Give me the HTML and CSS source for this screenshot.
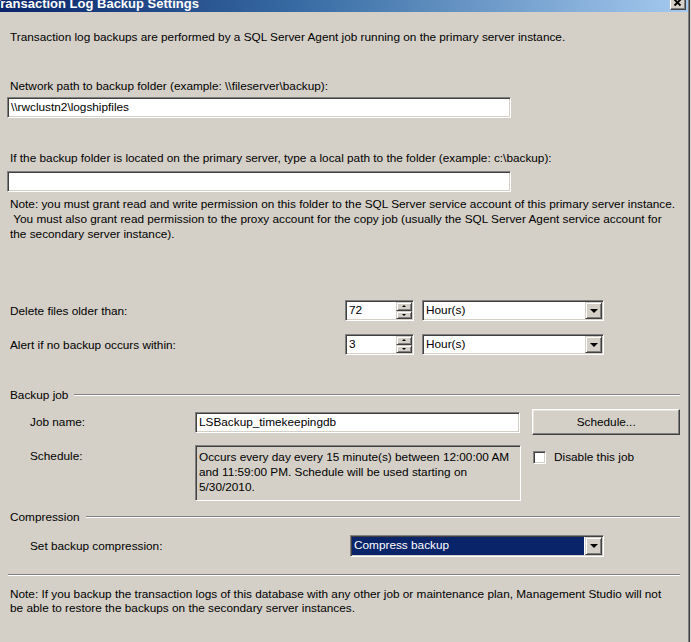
FILE: index.html
```html
<!doctype html>
<html lang="en">
  <head>
    <meta charset="UTF-8" />
    <title>Transaction Log Backup Settings</title>
    <link rel="stylesheet" href="styles.css">
  </head>
  <body>
    <div class="window">
      <div class="titlebar">
        <span class="title">Transaction Log Backup Settings</span>
        <span class="close-btn">
          <svg width="16" height="14" viewBox="0 0 16 14">
            <path d="M4.5 3.5 L10.5 9.5 M10.5 3.5 L4.5 9.5" stroke="#000" stroke-width="1.8" fill="none" />
          </svg>
        </span>
      </div>

      <div class="content">
        <p class="intro">Transaction log backups are performed by a SQL Server Agent job running on the primary server instance.</p>

        <div class="label net-label">Network path to backup folder (example: \\fileserver\backup):</div>
        <div class="textbox path-box">\\rwclustn2\logshipfiles</div>

        <div class="label local-label">If the backup folder is located on the primary server, type a local path to the folder (example: c:\backup):</div>
        <div class="textbox path-box local-box"></div>

        <p class="note perm-note">Note: you must grant read and write permission on this folder to the SQL Server service account of this primary server instance.<br>&nbsp;You must also grant read permission to the proxy account for the copy job (usually the SQL Server Agent service account for<br>the secondary server instance).</p>

        <!-- retention settings -->
        <div class="row delete-row">
          <span class="row-label">Delete files older than:</span>
          <div class="spinner">
            <span class="spin-value">72</span>
            <span class="spin-btns"><span class="spin-up"></span><span class="spin-down"></span></span>
          </div>
          <div class="combo unit-combo">
            <span class="combo-value">Hour(s)</span>
            <span class="combo-btn"></span>
          </div>
        </div>

        <div class="row alert-row">
          <span class="row-label">Alert if no backup occurs within:</span>
          <div class="spinner">
            <span class="spin-value">3</span>
            <span class="spin-btns"><span class="spin-up"></span><span class="spin-down"></span></span>
          </div>
          <div class="combo unit-combo">
            <span class="combo-value">Hour(s)</span>
            <span class="combo-btn"></span>
          </div>
        </div>

        <!-- backup job -->
        <div class="group-header job-header"><span>Backup job</span></div>

        <div class="row job-row">
          <span class="row-label sub-label">Job name:</span>
          <div class="textbox job-box">LSBackup_timekeepingdb</div>
          <span class="btn schedule-btn">Schedule...</span>
        </div>

        <div class="row schedule-row">
          <span class="row-label sub-label schedule-label">Schedule:</span>
          <div class="textbox readonly schedule-box">Occurs every day every 15 minute(s) between 12:00:00 AM<br>and 11:59:00 PM. Schedule will be used starting on<br>5/30/2010.</div>
          <label class="check">
            <span class="checkbox"></span>
            <span>Disable this job</span>
          </label>
        </div>

        <!-- compression -->
        <div class="group-header compression-header"><span>Compression</span></div>

        <div class="row compression-row">
          <span class="row-label sub-label compression-label">Set backup compression:</span>
          <div class="combo compression-combo">
            <span class="combo-value selected">Compress backup</span>
            <span class="combo-btn"></span>
          </div>
        </div>

        <div class="separator"></div>

        <p class="note bottom-note">Note: If you backup the transaction logs of this database with any other job or maintenance plan, Management Studio will not<br>be able to restore the backups on the secondary server instances.</p>
      </div>
    </div>
  </body>
</html>
```

FILE: styles.css
```css
body {
  margin: 0;
  background: #d4d0c8;
  font-family: "Liberation Sans", Arial, sans-serif;
  font-size: 11.8px;
  color: #000;
}
.window {
  width: 688px;
  min-height: 642px;
  border-right: 1px solid #808080;
  box-shadow: 1px 0 0 #404040;
}
.titlebar {
  height: 12px;
  overflow: hidden;
  display: flex;
  justify-content: space-between;
  background: linear-gradient(to right, #0a246a, #3a6ea5 45%, #a6caf0);
}
.title {
  color: #fff;
  font-weight: bold;
  font-size: 13px;
  line-height: 14px;
  margin-top: -3px;
  margin-left: -7px;
}
.close-btn {
  display: block;
  width: 16px;
  height: 14px;
  margin-top: -4px;
  margin-right: 2px;
  background: #d4d0c8;
  border: 1px solid;
  border-color: #fff #404040 #404040 #fff;
  box-shadow: inset -1px -1px 0 #808080;
  box-sizing: border-box;
}
.close-btn svg {
  display: block;
  margin: -1px 0 0 -1px;
}
.content {
  padding: 0 8px 0 7px;
}
.intro,
.note {
  margin: 0;
  padding-left: 3px;
}
.intro {
  margin-top: 18px;
  line-height: 14px;
}
.label {
  padding-left: 3px;
  line-height: 14px;
}
.net-label {
  margin-top: 35px;
}
.local-label {
  margin-top: 33px;
}
.textbox {
  background: #fff;
  border: 1px solid;
  border-color: #808080 #fff #fff #808080;
  box-shadow: inset 1px 1px 0 #404040, inset -1px -1px 0 #d4d0c8;
  box-sizing: border-box;
  padding: 0 3px;
  height: 21px;
  line-height: 19px;
}
.path-box {
  width: 504px;
  margin-top: 4px;
}
.local-box {
  margin-top: 6px;
}
.perm-note {
  margin-top: 5px;
  line-height: 15px;
}
.row {
  display: flex;
  align-items: center;
}
.row-label {
  width: 338px;
  padding-left: 3px;
  box-sizing: border-box;
  flex-shrink: 0;
}
.sub-label {
  width: 188px;
  padding-left: 23px;
}
.delete-row {
  margin-top: 58px;
}
.alert-row {
  margin-top: 13px;
}
.spinner,
.combo {
  display: flex;
  height: 21px;
  background: #fff;
  border: 1px solid;
  border-color: #808080 #fff #fff #808080;
  box-shadow: inset 1px 1px 0 #404040, inset -1px -1px 0 #d4d0c8;
  box-sizing: border-box;
  padding: 1px;
}
.spinner {
  width: 69px;
}
.spin-value,
.combo-value {
  flex: 1;
  padding-left: 2px;
  line-height: 17px;
}
.spin-btns {
  width: 16px;
  display: flex;
  flex-direction: column;
}
.spin-up,
.spin-down,
.combo-btn {
  position: relative;
  background: #d4d0c8;
  border: 1px solid;
  border-color: #d4d0c8 #404040 #404040 #d4d0c8;
  box-shadow: inset 1px 1px 0 #fff, inset -1px -1px 0 #808080;
  box-sizing: border-box;
}
.spin-up,
.spin-down {
  flex: 1;
}
.spin-up::after,
.spin-down::after,
.combo-btn::after {
  content: "";
  position: absolute;
  left: 50%;
  top: 50%;
  border-left: 2px solid transparent;
  border-right: 2px solid transparent;
  transform: translate(-50%, -50%);
}
.spin-up::after {
  border-bottom: 2px solid #000;
}
.spin-down::after {
  border-top: 2px solid #000;
}
.combo-btn {
  width: 17px;
}
.combo-btn::after {
  border-left-width: 4px;
  border-right-width: 4px;
  border-top: 4px solid #000;
}
.unit-combo {
  width: 182px;
  margin-left: 8px;
}
.group-header {
  display: flex;
  align-items: center;
  gap: 6px;
  padding-left: 3px;
  line-height: 14px;
}
.group-header::after,
.separator {
  content: "";
  flex: 1;
  height: 0;
  border-top: 1px solid #808080;
  border-bottom: 1px solid #fff;
}
.job-header {
  margin-top: 33px;
}
.job-row {
  margin-top: 7px;
}
.job-box {
  width: 326px;
}
.btn {
  width: 148px;
  height: 26px;
  margin-left: 12px;
  display: flex;
  align-items: center;
  justify-content: center;
  background: #d4d0c8;
  border: 1px solid;
  border-color: #fff #404040 #404040 #fff;
  box-shadow: inset -1px -1px 0 #808080, inset 1px 1px 0 #e8e6e1;
  box-sizing: border-box;
}
.schedule-row {
  margin-top: 10px;
  align-items: flex-start;
}
.schedule-label {
  padding-top: 4px;
}
.schedule-box {
  width: 326px;
  height: 56px;
  padding: 4px 3px;
  line-height: 15px;
  white-space: nowrap;
}
.readonly {
  background: #d4d0c8;
}
.check {
  display: flex;
  align-items: center;
  gap: 8px;
  margin: 5px 0 0 12px;
}
.checkbox {
  width: 13px;
  height: 13px;
  background: #fff;
  border: 1px solid;
  border-color: #808080 #fff #fff #808080;
  box-shadow: inset 1px 1px 0 #404040, inset -1px -1px 0 #d4d0c8;
  box-sizing: border-box;
}
.compression-header {
  margin-top: 9px;
}
.compression-row {
  margin-top: 11px;
}
.compression-label {
  width: 343px;
}
.compression-combo {
  width: 254px;
  height: 22px;
}
.combo-value.selected {
  background: #0a246a;
  color: #fff;
  margin-right: 1px;
}
.separator {
  margin: 17px 0 0 1px;
}
.bottom-note {
  margin-top: 11px;
  line-height: 14px;
}
```
